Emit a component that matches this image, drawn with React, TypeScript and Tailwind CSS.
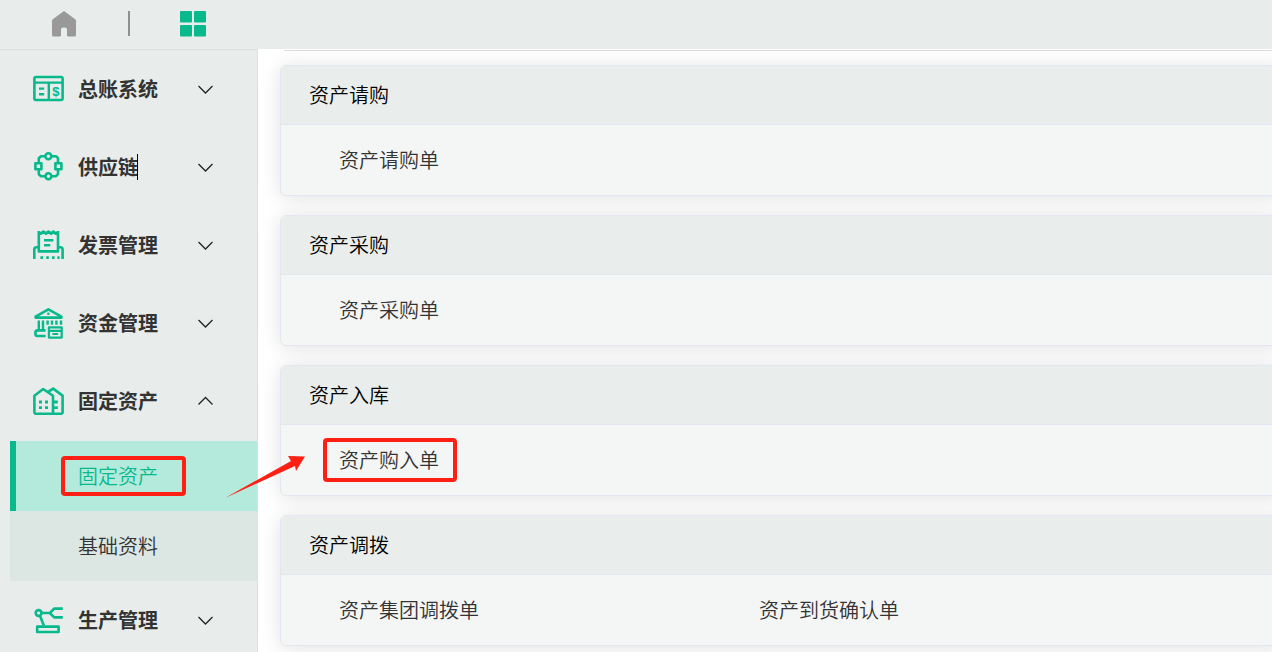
import React, { useState } from 'react';

interface MenuItem {
  key: string;
  label: string;
  icon: React.ReactNode;
  children?: string[];
}

interface CardGroup {
  title: string;
  items: string[];
}

function Icon({ children }: { children: React.ReactNode }) {
  return (
    <svg
      viewBox="0 0 32 32"
      className="size-8 shrink-0 text-[#08b98c]"
      fill="none"
      stroke="currentColor"
      strokeWidth="2.6"
      strokeLinejoin="round"
      aria-hidden="true"
    >
      {children}
    </svg>
  );
}

const LedgerIcon = () => (
  <Icon>
    <rect x="2.4" y="4" width="28.2" height="23" rx="1.5" />
    <path d="M2 9.6h29M16.8 9.6V27M7 15.6h5.2M7 21.2h5.2" strokeWidth="2.4" />
    <text
      x="23.8"
      y="23"
      textAnchor="middle"
      fontSize="13"
      fontWeight="bold"
      fill="currentColor"
      stroke="none"
      fontFamily="Liberation Sans, sans-serif"
    >
      $
    </text>
  </Icon>
);

const SupplyIcon = () => (
  <Icon>
    <circle cx="16.4" cy="5.2" r="3" />
    <circle cx="16.4" cy="25.2" r="3" />
    <rect x="3.4" y="12.2" width="6" height="6" />
    <rect x="23.4" y="12.2" width="6" height="6" />
    <path d="M13.4 5.2H9L6.8 7.2v5M19.4 5.2H24l2 2v5M6.8 18.2v5L9 25.2h4.4M26 18.2v5l-2 2h-4.6" />
  </Icon>
);

const InvoiceIcon = () => (
  <Icon>
    <path d="M6.8 2v20.4H26V2" />
    <path d="M6.8 3.6l2.2 1 2.4-1.8L14 4.6l2.4-1.8L19 4.6l2.4-1.8 2.4 1.8 2.2-1" strokeWidth="3" />
    <path d="M12 11.2h9.4M12 16.2h6.2" strokeWidth="2.6" />
    <path d="M6.8 18.2H4.5q-2.2 0-2.2 2.2V30M26 18.2h2.4q2.2 0 2.2 2.2V30" />
    <path d="M8.4 28.6H11M14.2 28.6h2.6M20 28.6h2.6M25.4 28.6h2.2" strokeWidth="2.8" />
  </Icon>
);

const FundIcon = () => (
  <Icon>
    <path d="M16.4 2.4 3.6 9.6v1h25.8v-1z" />
    <circle cx="16.4" cy="6.8" r="1.3" fill="currentColor" stroke="none" />
    <path d="M6.8 13.5v9M11 13.5v9M15.6 13.5v4.3M20 13.5v4.3M24.4 13.5v4.3M29 13.5v4.3" strokeWidth="2.4" />
    <path d="M13.6 23.4H5.6a2.2 2.2 0 0 0-2.2 2.2v1.2A2.2 2.2 0 0 0 5.6 29h8" />
    <path d="M16.9 20.4h12.8v10.2H16.9zM16.9 23.8h12.8M20.4 27h5.8" strokeWidth="2.2" />
  </Icon>
);

const AssetIcon = () => (
  <Icon>
    <path d="M2.4 10.8 11.2 4l9.8 6.8v18H3.9a1.5 1.5 0 0 1-1.5-1.5z" />
    <path d="M16 6.8 21.2 3.6l9.4 7v16.7a1.5 1.5 0 0 1-1.5 1.5H21" />
    <path d="M7 17h3M13 17h3M7 22.6h3M13 22.6h3M21 17h4.8M21 22.6h4.8" strokeWidth="2.9" />
  </Icon>
);

const ProduceIcon = () => (
  <Icon>
    <circle cx="6.6" cy="9" r="2.9" />
    <path d="M9.6 9h8.2l4.4-4.4h8.6M17.8 9l4.4 4.4h8.6M8 11.8l3.8 9.6" />
    <rect x="5.2" y="22.6" width="21.4" height="5.4" />
  </Icon>
);

const MENU: MenuItem[] = [
  { key: 'ledger', label: '总账系统', icon: <LedgerIcon /> },
  { key: 'supply', label: '供应链', icon: <SupplyIcon /> },
  { key: 'invoice', label: '发票管理', icon: <InvoiceIcon /> },
  { key: 'fund', label: '资金管理', icon: <FundIcon /> },
  { key: 'asset', label: '固定资产', icon: <AssetIcon />, children: ['固定资产', '基础资料'] },
  { key: 'produce', label: '生产管理', icon: <ProduceIcon /> },
];

const GROUPS: CardGroup[] = [
  { title: '资产请购', items: ['资产请购单'] },
  { title: '资产采购', items: ['资产采购单'] },
  { title: '资产入库', items: ['资产购入单'] },
  { title: '资产调拨', items: ['资产集团调拨单', '资产到货确认单'] },
];

const HIGHLIGHTED = '资产购入单';

function Chevron({ open }: { open: boolean }) {
  return (
    <svg viewBox="0 0 16 16" className="size-4" fill="none" stroke="#222" strokeWidth="1.3" aria-hidden="true">
      <path d={open ? 'M1.5 11.5l7-7 7 7' : 'M1.5 5l7 7 7-7'} />
    </svg>
  );
}

function TopBar() {
  return (
    <header className="flex h-[49px] shrink-0 items-center bg-[#e8edeb] pb-0.5 pl-[52px]">
      <button type="button" aria-label="首页">
        <svg viewBox="0 0 24 26" className="h-[26px] w-6" fill="#999" aria-hidden="true">
          <path d="M12 0 23.2 8.3a2 2 0 0 1 .8 1.6V24a1.6 1.6 0 0 1-1.6 1.6H16a1 1 0 0 1-1-1V18.5a2 2 0 0 0-2-2h-2a2 2 0 0 0-2 2v6.1a1 1 0 0 1-1 1H1.6A1.6 1.6 0 0 1 0 24V9.9a2 2 0 0 1 .8-1.6z" />
        </svg>
      </button>
      <span className="mr-[50px] ml-[52px] h-[25px] w-0.5 bg-[#8f9190]" />
      <button type="button" aria-label="应用">
        <svg viewBox="0 0 26 26" className="size-[26px]" fill="#08b98c" aria-hidden="true">
          <rect width="12" height="11.5" rx="1" />
          <rect x="14" width="12" height="11.5" rx="1" />
          <rect y="14" width="12" height="11.5" rx="1" />
          <rect x="14" y="14" width="12" height="11.5" rx="1" />
        </svg>
      </button>
    </header>
  );
}

function Sidebar() {
  const [openKey, setOpenKey] = useState<string>('asset');
  const [activeChild, setActiveChild] = useState<string>('固定资产');

  return (
    <nav className="relative z-10 w-[258px] shrink-0 border-t border-r border-[#dce1e0] bg-[#e8edeb]">
      {MENU.map((item) => {
        const open = openKey === item.key;
        return (
          <div key={item.key}>
            <button
              type="button"
              onClick={() => setOpenKey(open ? '' : item.key)}
              aria-expanded={open}
              className="flex h-[78px] w-full items-center pr-11 pl-8 text-left"
            >
              {item.icon}
              <span className="ml-3.5 text-[20px] leading-7 font-bold text-[#333]">{item.label}</span>
              {item.key === 'supply' && <span className="-ml-px h-[26px] w-px bg-black" />}
              <span className="ml-auto">
                <Chevron open={open} />
              </span>
            </button>
            {open && item.children && (
              <ul className="mt-px ml-2.5 bg-[#dce6e3]">
                {item.children.map((child) => (
                  <li key={child}>
                    <a
                      href="#"
                      onClick={() => setActiveChild(child)}
                      className={
                        child === activeChild
                          ? 'flex h-[70px] items-center border-l-6 border-[#08b98c] bg-[#b4eadc] pl-[62px] text-[#08b98c]'
                          : 'flex h-[70px] items-center pl-[68px] text-[#333]'
                      }
                    >
                      <span className="relative text-[20px] leading-7 font-[350]">
                        {child}
                        {child === activeChild && (
                          <span className="absolute -inset-y-1.5 -right-7 -left-[17px] rounded border-4 border-[#ff2015]" />
                        )}
                      </span>
                    </a>
                  </li>
                ))}
              </ul>
            )}
          </div>
        );
      })}
      {/* arrow from the active menu entry to the highlighted bill */}
      <svg viewBox="0 0 80 42" className="absolute top-[406px] left-[225px] h-[42px] w-20" fill="#ff2015" aria-hidden="true">
        <path d="M0 42 66 5 63 0 80 .5 71 15 70 10z" />
      </svg>
    </nav>
  );
}

function GroupCard({ group }: { group: CardGroup }) {
  return (
    <section className="rounded-md border border-[#e4e7ed] bg-[#f4f6f5] shadow-[0_2px_20px_rgba(0,0,0,0.12)]">
      <h2 className="flex h-[59px] items-center rounded-t-md border-b border-[#e4e7ed] bg-[#e9eeec] pl-7 text-[20px] font-[350] text-black">
        {group.title}
      </h2>
      <ul className="flex h-[70px] items-center pl-[58px]">
        {group.items.map((item) => (
          <li key={item} className="w-[420px]">
            <a href="#" className="relative inline-block text-[20px] leading-7 font-[350] text-[#333]">
              {item}
              {item === HIGHLIGHTED && (
                <span className="absolute -inset-y-2 -right-[18px] -left-4 rounded border-4 border-[#ff2015]" />
              )}
            </a>
          </li>
        ))}
      </ul>
    </section>
  );
}

export default function App() {
  return (
    <div className="flex h-screen flex-col overflow-hidden bg-white font-['Noto_Sans_CJK_SC',sans-serif]">
      <TopBar />
      <div className="flex min-h-0 flex-1">
        <Sidebar />
        <main className="min-w-0 flex-1 overflow-hidden pt-px pl-[22px]">
          <div className="ml-1 h-px bg-[#dcdfde]" />
          <div className="mt-3.5 -mr-3 flex flex-col gap-[19px]">
            {GROUPS.map((group) => (
              <GroupCard key={group.title} group={group} />
            ))}
          </div>
        </main>
      </div>
    </div>
  );
}
